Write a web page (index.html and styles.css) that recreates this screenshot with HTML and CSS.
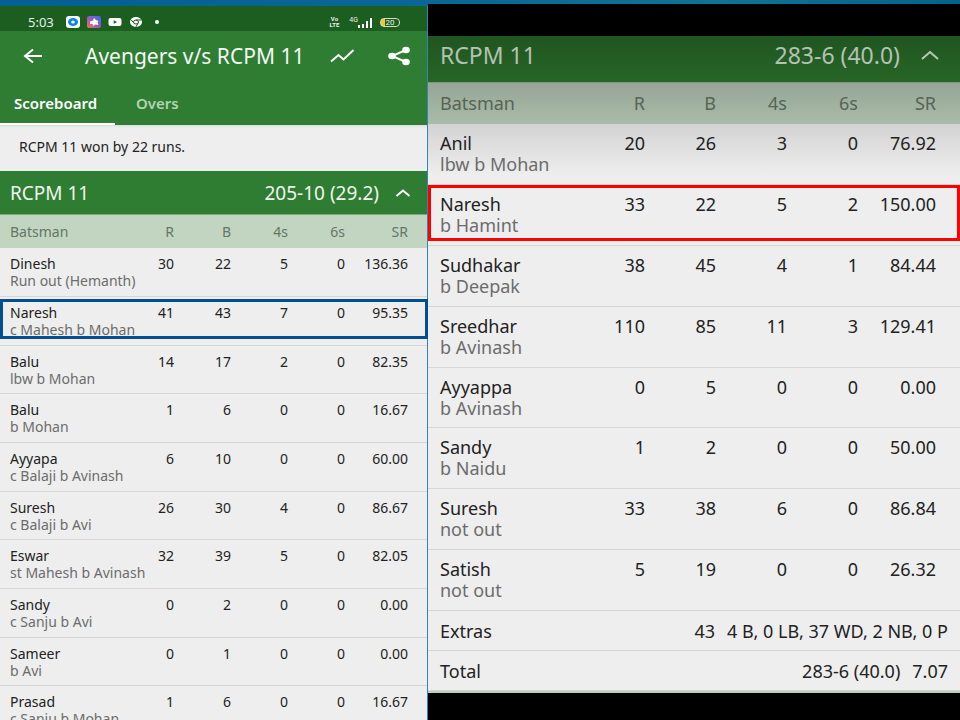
FILE: index.html
```html
<!DOCTYPE html>
<html lang="en">
<head>
<meta charset="utf-8">
<title>Avengers v/s RCPM 11</title>
<link rel="stylesheet" href="styles.css">
</head>
<body>
<main class="board">
  <section class="pane pane-left">
    <div class="status">
      <span class="clock">5:03</span>
      <svg class="app" width="14" height="12" viewBox="0 0 14 12"><rect width="14" height="12" rx="3" fill="#fff"/><ellipse cx="7" cy="6" rx="5" ry="4" fill="#0b84e8"/><ellipse cx="7" cy="6" rx="1.8" ry="1.5" fill="#fff"/></svg>
      <svg class="app" width="14" height="12" viewBox="0 0 14 12"><defs><linearGradient id="g" x1="0" y1="1" x2="1" y2="0"><stop offset="0" stop-color="#f07a4a"/><stop offset=".45" stop-color="#a656b8"/><stop offset="1" stop-color="#2f6df0"/></linearGradient></defs><rect width="14" height="12" rx="2" fill="url(#g)"/><path d="M3 5.500 6 4.500 7 2l2 2 2.500 1-1 1.500 1 2.500-3-.5L6 10l-.5-2L3 8z" fill="#fff"/></svg>
      <svg class="app" width="14" height="12" viewBox="0 0 14 12"><rect x=".5" y="2" width="13" height="8" rx="2" fill="#fff"/><path d="M5.700 4.200v3.600L9 6z" fill="#1b5e20"/></svg>
      <svg class="app" width="14" height="12" viewBox="0 0 14 12"><ellipse cx="7" cy="6" rx="6" ry="5" fill="#fff"/><ellipse cx="7" cy="6" rx="2.500" ry="2" fill="#fff" stroke="#1b5e20"/><path d="M7 4h5.300M4.900 7 2 3.800M9 7.200 7 10.800" stroke="#1b5e20" fill="none"/></svg>
      <svg class="app" width="14" height="12" viewBox="0 0 14 12"><circle cx="7" cy="6" r="2" fill="#fff"/></svg>
      <span class="volte"><span>Vo</span><span>LTE</span></span>
      <span class="signal"><span class="net">4G</span><svg width="20" height="11" viewBox="0 0 20 11" fill="#fff"><path d="M5 8h2v3H5zM9 7h2v4H9zM13 4h2v7h-2zM17 1h2v10h-2z"/></svg></span>
      <span class="battery"><span>20</span></span>
    </div>
    <header class="appbar">
      <button class="icon" aria-label="Back"><svg width="22" height="18" viewBox="0 0 22 18" fill="none" stroke="#fff" stroke-width="2"><path d="M20 9H3M11 2.500 3 9l8 6.500"/></svg></button>
      <h1>Avengers v/s RCPM 11</h1>
      <button class="icon" aria-label="Chart"><svg width="26" height="18" viewBox="0 0 26 18" fill="none" stroke="#fff" stroke-width="2"><path d="M2 14.500 9.500 8l5 4.500L24.500 3"/></svg></button>
      <button class="icon" aria-label="Share"><svg width="24" height="20" viewBox="0 0 24 20" fill="#fff"><path d="M19 4 5 10l14 6" fill="none" stroke="#fff" stroke-width="2"/><ellipse cx="19" cy="4" rx="3.800" ry="3.200"/><ellipse cx="5" cy="10" rx="3.800" ry="3.200"/><ellipse cx="19" cy="16" rx="3.800" ry="3.200"/></svg></button>
    </header>
    <nav class="tabs">
      <a href="#scoreboard" class="active">Scoreboard</a>
      <a href="#overs">Overs</a>
    </nav>
    <p class="result">RCPM 11 won by 22 runs.</p>
    <div class="innings" id="scoreboard">
      <h2>RCPM 11</h2><span>205-10 (29.2)</span>
      <button class="icon" aria-label="Collapse"><svg width="16" height="10" viewBox="0 0 16 10" fill="none" stroke="#fff" stroke-width="2"><path d="M1.500 8 8 2.500 14.500 8"/></svg></button>
    </div>
    <table>
      <colgroup><col><col class="n"><col class="n"><col class="n"><col class="n"><col class="sr"></colgroup>
      <thead><tr><th>Batsman</th><th>R</th><th>B</th><th>4s</th><th>6s</th><th>SR</th></tr></thead>
      <tbody>
        <tr><td>Dinesh<small>Run out (Hemanth)</small></td><td>30</td><td>22</td><td>5</td><td>0</td><td>136.36</td></tr>
        <tr class="mark"><td>Naresh<small>c Mahesh b Mohan</small></td><td>41</td><td>43</td><td>7</td><td>0</td><td>95.35</td></tr>
        <tr><td>Balu<small>lbw b Mohan</small></td><td>14</td><td>17</td><td>2</td><td>0</td><td>82.35</td></tr>
        <tr><td>Balu<small>b Mohan</small></td><td>1</td><td>6</td><td>0</td><td>0</td><td>16.67</td></tr>
        <tr><td>Ayyapa<small>c Balaji b Avinash</small></td><td>6</td><td>10</td><td>0</td><td>0</td><td>60.00</td></tr>
        <tr><td>Suresh<small>c Balaji b Avi</small></td><td>26</td><td>30</td><td>4</td><td>0</td><td>86.67</td></tr>
        <tr><td>Eswar<small>st Mahesh b Avinash</small></td><td>32</td><td>39</td><td>5</td><td>0</td><td>82.05</td></tr>
        <tr><td>Sandy<small>c Sanju b Avi</small></td><td>0</td><td>2</td><td>0</td><td>0</td><td>0.00</td></tr>
        <tr><td>Sameer<small>b Avi</small></td><td>0</td><td>1</td><td>0</td><td>0</td><td>0.00</td></tr>
        <tr><td>Prasad<small>c Sanju b Mohan</small></td><td>1</td><td>6</td><td>0</td><td>0</td><td>16.67</td></tr>
      </tbody>
    </table>
  </section>
  <section class="pane pane-right">
    <div class="innings">
      <h2>RCPM 11</h2><span>283-6 (40.0)</span>
      <button class="icon" aria-label="Collapse"><svg width="20" height="12" viewBox="0 0 20 12" fill="none" stroke="#b9c9b9" stroke-width="2"><path d="M2 10 10 3l8 7"/></svg></button>
    </div>
    <table>
      <colgroup><col><col class="n"><col class="n"><col class="n"><col class="n"><col class="sr"></colgroup>
      <thead><tr><th>Batsman</th><th>R</th><th>B</th><th>4s</th><th>6s</th><th>SR</th></tr></thead>
      <tbody>
        <tr class="shaded"><td>Anil<small>lbw b Mohan</small></td><td>20</td><td>26</td><td>3</td><td>0</td><td>76.92</td></tr>
        <tr class="mark"><td>Naresh<small>b Hamint</small></td><td>33</td><td>22</td><td>5</td><td>2</td><td>150.00</td></tr>
        <tr><td>Sudhakar<small>b Deepak</small></td><td>38</td><td>45</td><td>4</td><td>1</td><td>84.44</td></tr>
        <tr><td>Sreedhar<small>b Avinash</small></td><td>110</td><td>85</td><td>11</td><td>3</td><td>129.41</td></tr>
        <tr><td>Ayyappa<small>b Avinash</small></td><td>0</td><td>5</td><td>0</td><td>0</td><td>0.00</td></tr>
        <tr><td>Sandy<small>b Naidu</small></td><td>1</td><td>2</td><td>0</td><td>0</td><td>50.00</td></tr>
        <tr><td>Suresh<small>not out</small></td><td>33</td><td>38</td><td>6</td><td>0</td><td>86.84</td></tr>
        <tr><td>Satish<small>not out</small></td><td>5</td><td>19</td><td>0</td><td>0</td><td>26.32</td></tr>
      </tbody>
    </table>
    <div class="sum"><span class="label">Extras</span><span>43</span><span>4 B, 0 LB, 37 WD, 2 NB, 0 P</span></div>
    <div class="sum"><span class="label">Total</span><span>283-6 (40.0)</span><span>7.07</span></div>
    <div class="strip"></div>
  </section>
</main>
</body>
</html>
```
FILE: styles.css
```css
* { box-sizing: border-box; }

body {
  margin: 0;
  height: 100vh;
  overflow: hidden;
  background: linear-gradient(90deg, #045f92, #0a6795 45%, #0d7593 75%, #04638a);
  font-family: "Noto Sans", sans-serif;
  color: #222;
}

.board {
  display: grid;
  grid-template-columns: 427fr 532fr;
  column-gap: 1px;
  height: 100%;
}

.pane { min-width: 0; }

.pane-left {
  --line: 17px;
  --size: 14px;
  --pad: 10px;
  --end: 19px;
  --top: 7px;
  --row: 49px;
  margin-top: 6px;
  background: #eee;
  box-shadow: 1px 0 #2f86bd;
}

.pane-right {
  --line: 21px;
  --size: 18px;
  --pad: 12px;
  --end: 24px;
  --top: 9px;
  --row: 61px;
  margin-top: 4px;
  padding-top: 32px;
  background: #000;
}

/* Phone status bar */
.status {
  display: flex;
  align-items: center;
  height: 25px;
  padding: 7px 27px 0 28px;
  background: #1b5e20;
  color: #e8f0e8;
}

.clock { width: 38px; font-size: 13px; line-height: 16px; }
.app { margin-right: 7px; }

.volte {
  display: flex;
  flex-direction: column;
  margin-left: auto;
  font: 700 6px/6px Roboto, sans-serif;
  align-items: center;
}

.signal { display: flex; align-items: flex-start; margin: 0 7px 0 10px; }
.signal svg { margin-left: -5px; }
.net { font: 7px/7px Roboto, sans-serif; }

.battery {
  width: 20px;
  height: 9px;
  border: 1px solid #d8dcc0;
  border-radius: 4px;
  background: linear-gradient(90deg, #f4c430 4px, transparent 4px);
  font: 8px/7px Roboto, sans-serif;
  text-align: center;
}

/* App bar and tabs */
.icon {
  display: flex;
  padding: 0;
  border: 0;
  background: none;
}

.appbar {
  display: flex;
  align-items: center;
  height: 50px;
  padding: 0 16px 0 22px;
  background: #2e7d32;
}

h1, h2 { margin: 0; font-weight: 400; }
h1 { flex: 1; margin-left: 41px; font-size: 21px; line-height: 24px; color: #f4f8f4; white-space: nowrap; }
.appbar h1 ~ .icon + .icon { margin-left: 32px; }

.tabs { display: flex; height: 44px; gap: 7px; background: #2e7d32; }

.tabs a {
  padding: 12px 14px 0;
  border-bottom: 2px solid transparent;
  color: #b4d2b5;
  font-size: 15px;
  font-weight: 600;
  line-height: 20px;
  text-decoration: none;
}

.tabs .active { width: 115px; border-color: #fff; color: #fff; }

.result {
  margin: 0;
  height: 46px;
  padding: 0 19px;
  font-size: 14px;
  line-height: 44px;
  background: linear-gradient(#ddd, #eee 3px);
}

/* Innings heading */
.innings {
  display: flex;
  align-items: center;
  height: 44px;
  padding: 0 16px 0 var(--pad);
  background: #2e7d32;
  border-bottom: 1px solid #79aa7b;
  color: #f0f5f0;
  font-size: 19px;
  line-height: 24px;
}

.innings h2 { flex: 1; font-size: inherit; }
.innings .icon { margin-left: 16px; }

.pane-right .innings {
  height: 47px;
  padding-bottom: 8px;
  padding-right: 20px;
  background: linear-gradient(#205520, #276627);
  border-color: #829482;
  color: #b4c2b4;
  font-size: 23px;
}

.pane-right .innings .icon { margin-left: 20px; }

/* Batting table */
table {
  width: 100%;
  table-layout: fixed;
  border-collapse: separate;
  border-spacing: 0;
  background: #eee;
  font-size: var(--size);
  line-height: var(--line);
}

.n { width: 57px; }
.sr { width: 82px; }
.pane-right .n { width: 71px; }
.pane-right .sr { width: 102px; }

th {
  height: 33px;
  padding: 0;
  background: #c1d5c1;
  color: #667566;
  font-size: inherit;
  font-weight: 400;
  text-align: right;
}

.pane-right th {
  height: 41px;
  background: linear-gradient(#97a696, #a9bba9);
  color: #566456;
}

td {
  height: var(--row);
  padding: var(--top) 0 0;
  border-bottom: 1px solid #d6d6d6;
  text-align: right;
  vertical-align: top;
}

.pane-left tr:nth-child(3n) td { height: 48px; }
.pane-right tr:nth-child(5n) td { height: 60px; }

th:first-child, td:first-child {
  padding-left: var(--pad);
  text-align: left;
  white-space: nowrap;
}

th:last-child, td:last-child { padding-right: var(--end); }

small {
  display: block;
  color: #6c6c6c;
  font-size: inherit;
}

.shaded { background: linear-gradient(#d3d3d3, #eee 85%); }

/* Highlight frame drawn over a row */
.mark { position: relative; }

.mark td:first-child::after {
  content: "";
  position: absolute;
  inset: 2px -1px 7px 0;
  border: 3px solid #00508f;
}

.pane-right .mark td:first-child::after { inset: 0 0 5px 0; border-color: #f00; }

/* Totals */
.sum {
  display: flex;
  align-items: center;
  gap: 12px;
  height: 40px;
  padding: 0 12px;
  border-bottom: 1px solid #d6d6d6;
  background: #eee;
  font-size: var(--size);
  line-height: 24px;
}

.label { flex: 1; }
.strip { height: 2px; background: #bccdbb; }
```
